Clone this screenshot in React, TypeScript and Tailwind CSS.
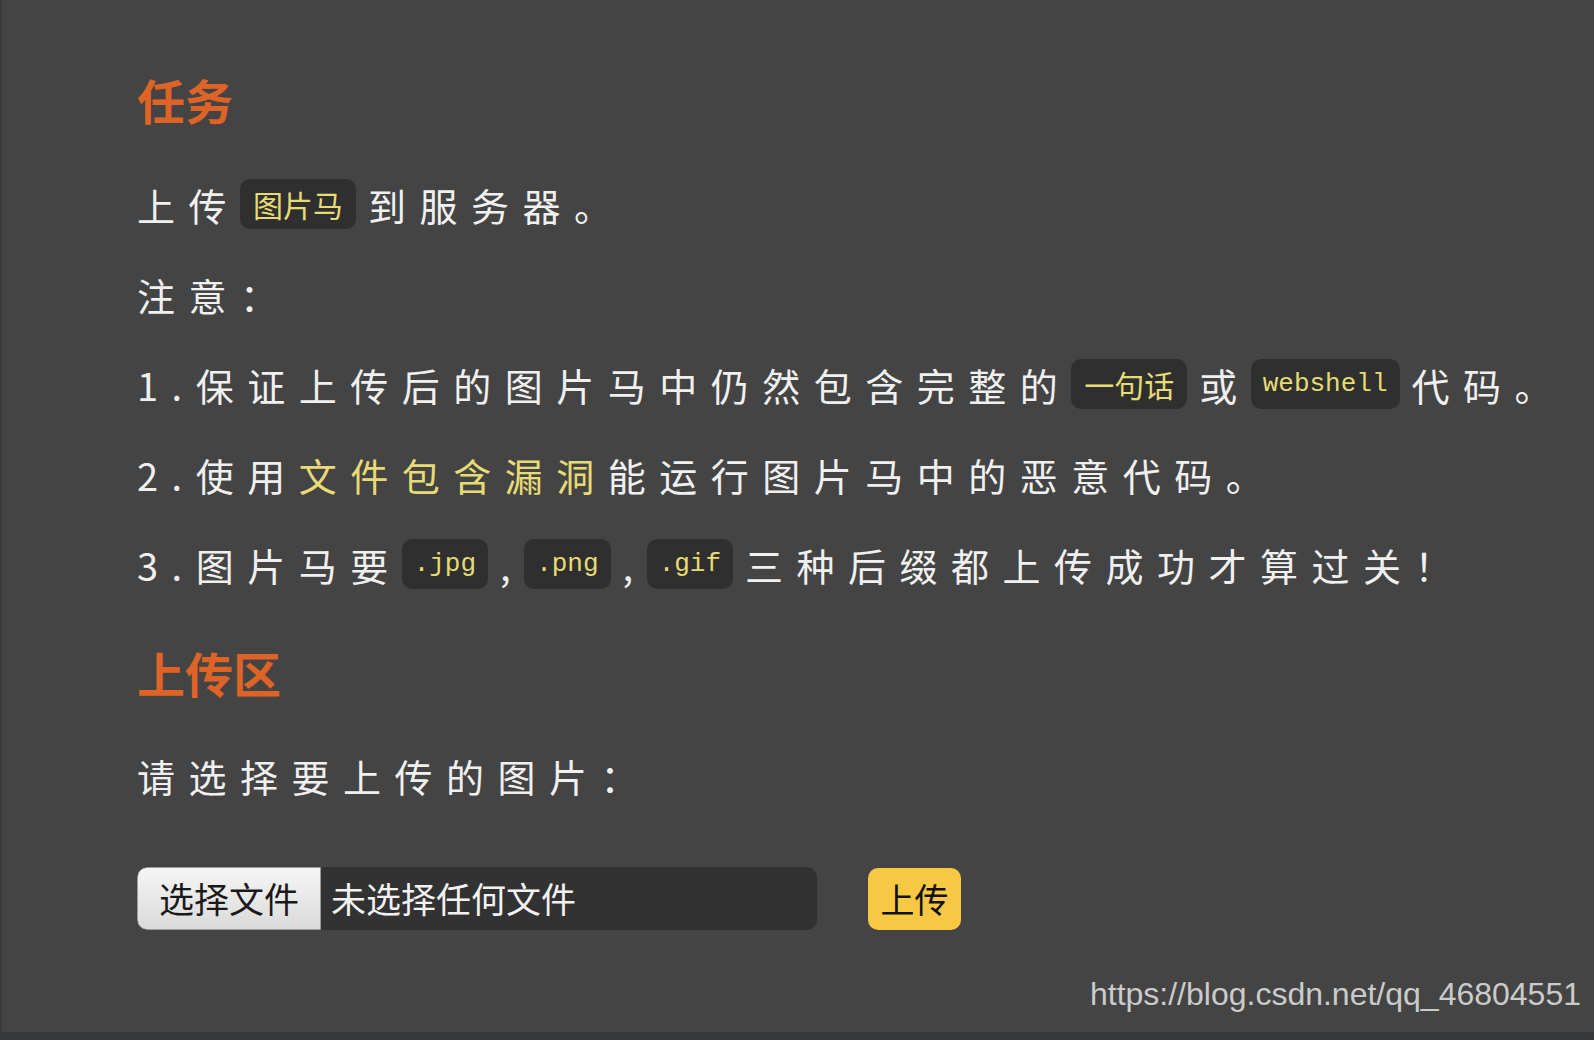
import React from 'react';

const CJK = { fontFamily: '"Noto Sans CJK SC", "Noto Sans", sans-serif' };

const Chip: React.FC<{ children: React.ReactNode; mono?: boolean }> = ({ children, mono }) => (
  <span
    className={
      mono
        ? "inline-flex items-center h-[50px] px-[12px] mr-[12px] rounded-[10px] bg-[#2f2f2f] text-[#e6db74] text-[26px] tracking-normal font-['Liberation_Mono','Noto_Sans_CJK_SC',monospace]"
        : "inline-flex items-center h-[50px] px-[13px] mr-[12px] rounded-[10px] bg-[#2f2f2f] text-[#e6db74] text-[30px] tracking-normal"
    }
  >
    {children}
  </span>
);

const Row: React.FC<{ children: React.ReactNode; className?: string }> = ({ children, className }) => (
  <div
    className={
      'flex items-center h-[90px] whitespace-nowrap text-[38px] tracking-[13.5px] text-[#f0f0f0] ' +
      (className || '')
    }
  >
    {children}
  </div>
);

export default function App() {
  return (
    <div className="w-full h-[1040px] flex flex-col bg-[#363a3d]" style={CJK}>
      <div className="h-[1032px] flex flex-col bg-[#444444] border-l-2 border-[#393c3f]">
        <div className="flex flex-col pl-[135px] pt-[71px]">
          <h2 className="text-[48px] font-bold leading-[56px] text-[#dd6326]">任务</h2>

          <Row className="mt-[32px]">
            <span>上传</span>
            <Chip>图片马</Chip>
            <span>到服务器。</span>
          </Row>

          <Row>注意：</Row>

          <Row>
            <span>1.保证上传后的图片马中仍然包含完整的</span>
            <Chip>一句话</Chip>
            <span>或</span>
            <Chip mono>webshell</Chip>
            <span>代码。</span>
          </Row>

          <Row>
            <span>2.使用</span>
            <span className="text-[#e6db74]">文件包含漏洞</span>
            <span>能运行图片马中的恶意代码。</span>
          </Row>

          <Row>
            <span>3.图片马要</span>
            <Chip mono>.jpg</Chip>
            <span>,</span>
            <Chip mono>.png</Chip>
            <span>,</span>
            <Chip mono>.gif</Chip>
            <span>三种后缀都上传成功才算过关！</span>
          </Row>

          <h2 className="mt-[35px] text-[48px] font-bold leading-[56px] text-[#dd6326]">上传区</h2>

          <Row className="mt-[30px]">请选择要上传的图片：</Row>

          <div className="mt-[47px] flex items-center">
            <div className="flex items-center h-[63px] w-[680px] rounded-[10px] bg-[#323232] overflow-hidden">
              <button className="h-full px-[21px] flex items-center rounded-l-[10px] border border-[#9a9a9a] bg-gradient-to-b from-[#f6f6f6] to-[#dadada] text-[#1a1a1a] text-[35px]">
                选择文件
              </button>
              <span className="ml-[10px] text-[35px] text-[#f2f2f2]">未选择任何文件</span>
            </div>
            <button className="ml-[51px] h-[62px] w-[93px] flex items-center justify-center rounded-[10px] bg-[#f6c844] text-[34px] text-[#111111]">
              上传
            </button>
          </div>
        </div>

        <div className="mt-[44px] flex justify-end pr-[13px]">
          <span className="text-[32px] leading-[40px] text-[#cbcbcb] font-['Liberation_Sans',Arial,sans-serif]">
            https://blog.csdn.net/qq_46804551
          </span>
        </div>
      </div>
    </div>
  );
}
